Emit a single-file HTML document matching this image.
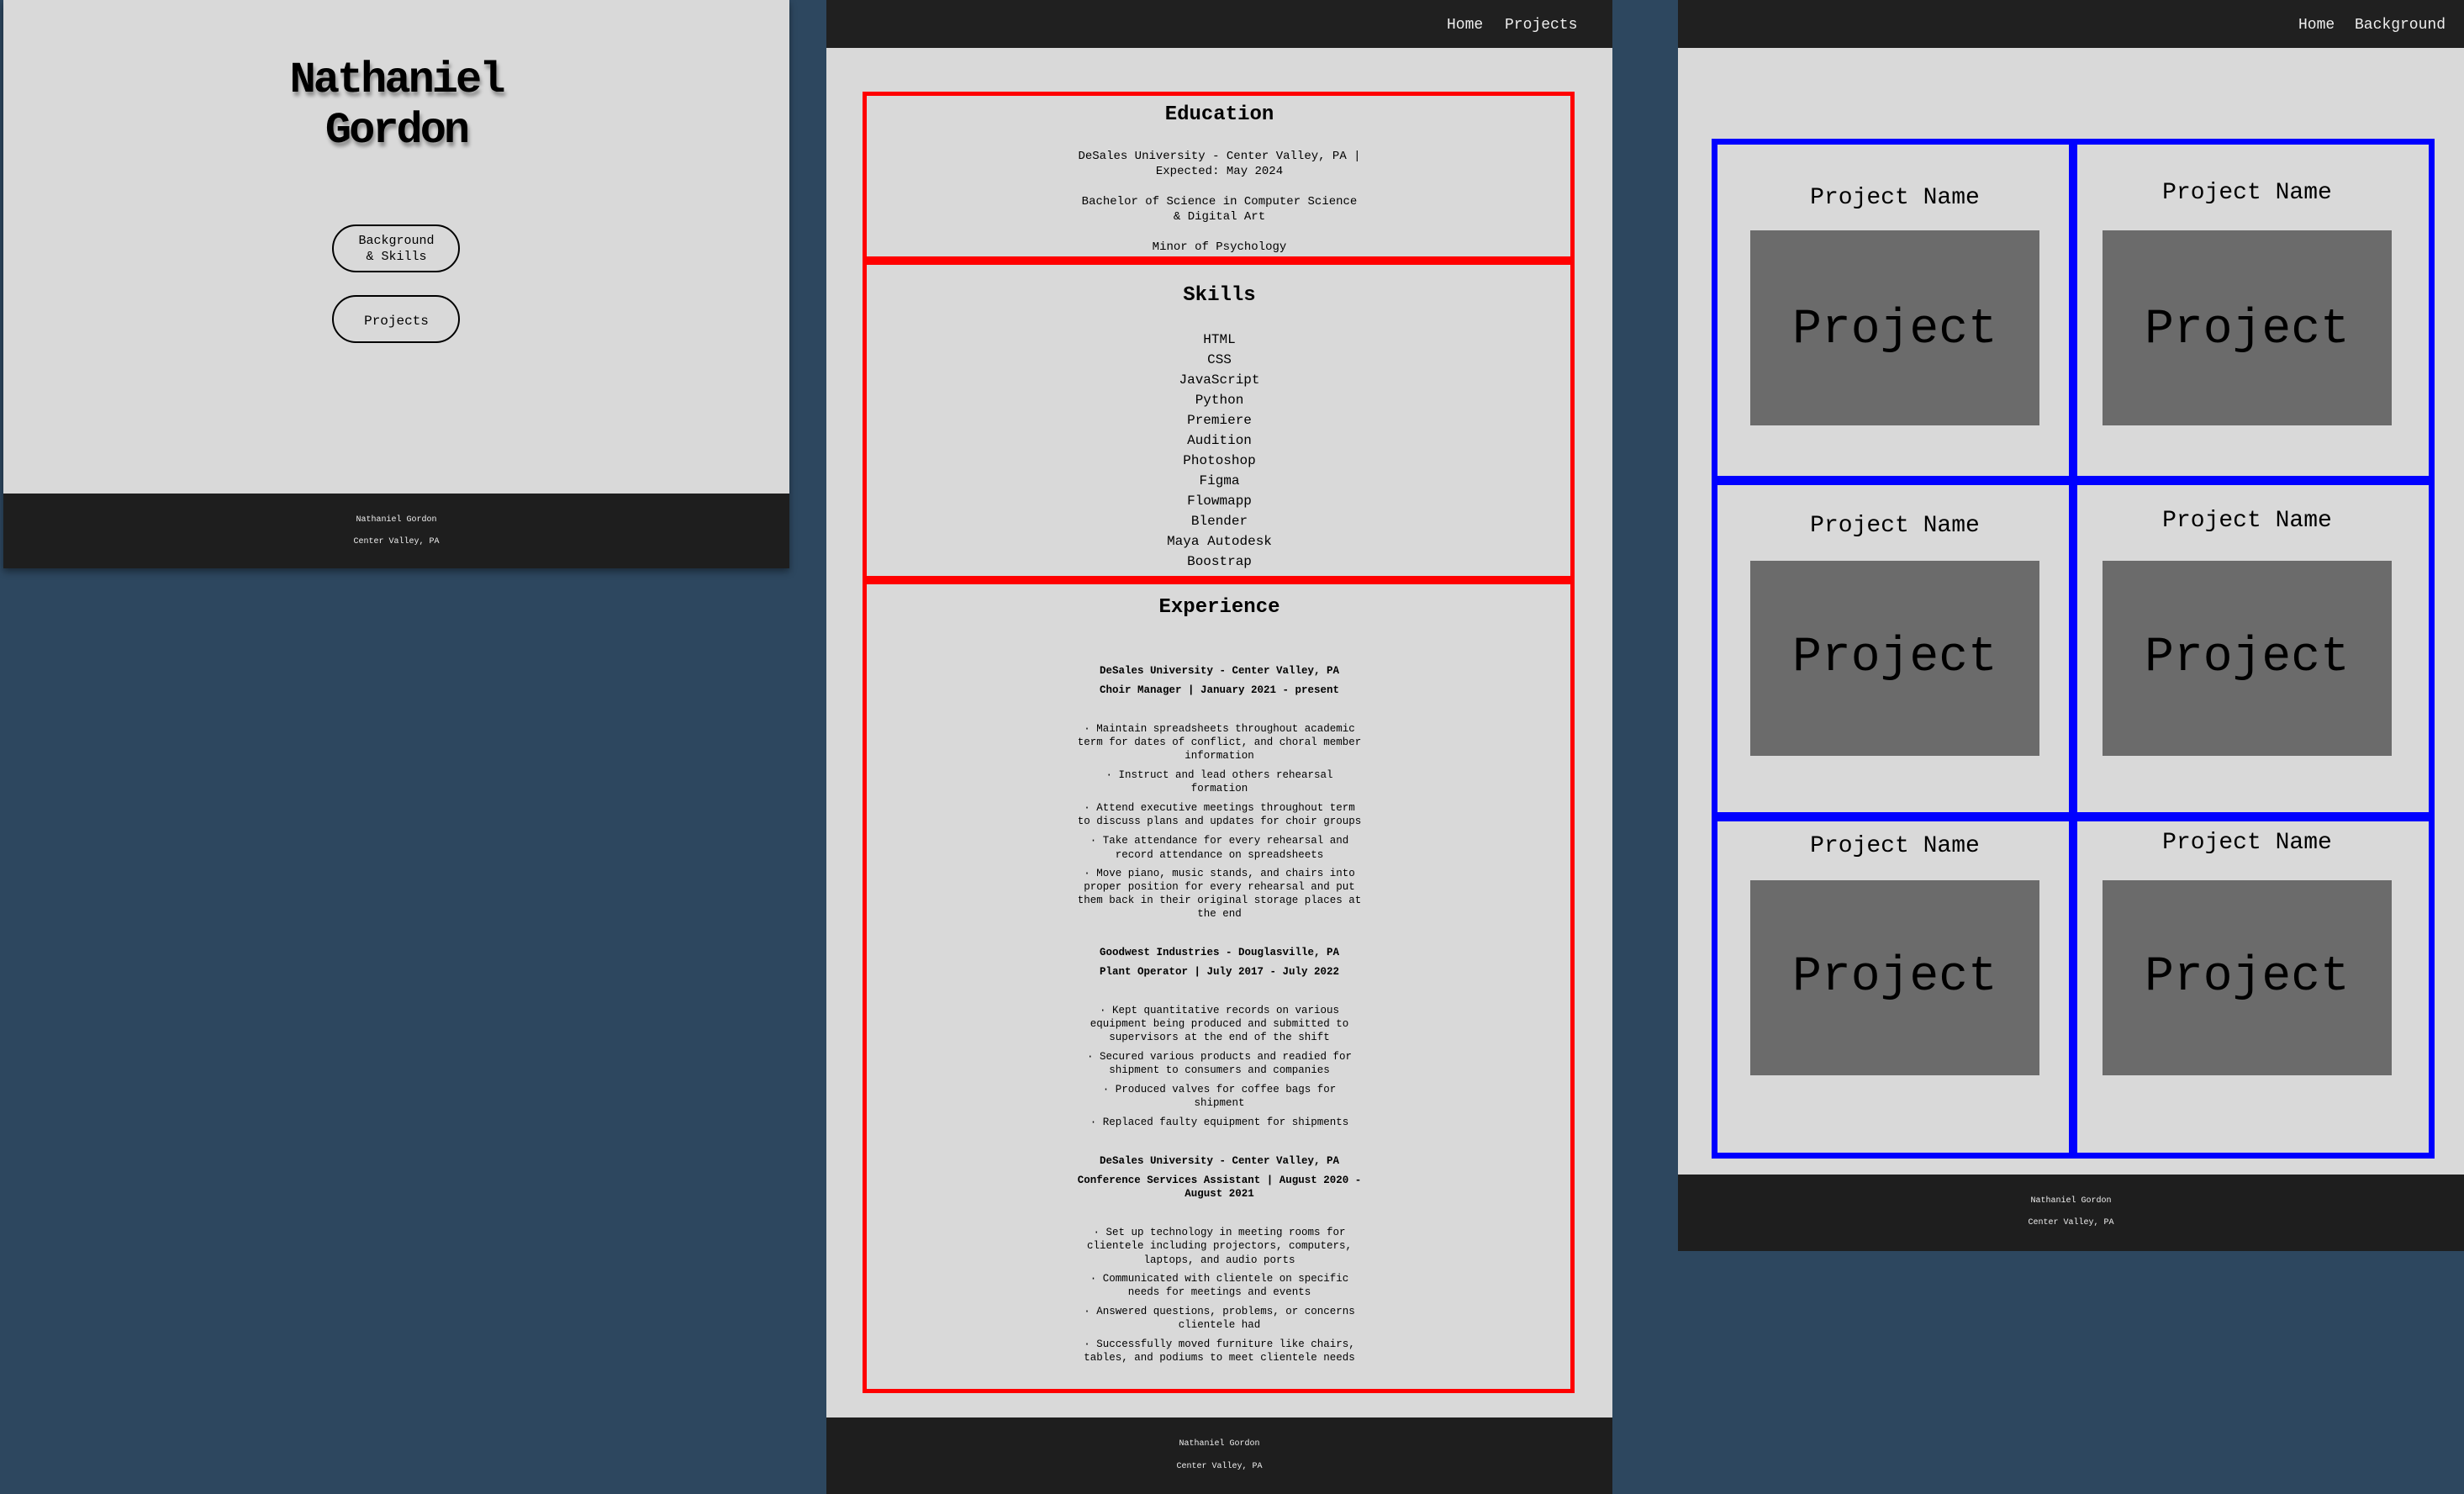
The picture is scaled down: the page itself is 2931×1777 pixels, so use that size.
<!DOCTYPE html>
<html><head><meta charset="utf-8"><style>
*{margin:0;padding:0;box-sizing:border-box}
body{width:2931px;height:1777px;background:#2d475f;position:relative;overflow:hidden;font-family:"Liberation Mono","DejaVu Sans Mono",monospace;color:#000}
.p{position:absolute;background:#d9d9d9;overflow:hidden}
.t{position:absolute;left:0;right:0;text-align:center;white-space:nowrap}
.ft{position:absolute;left:0;right:0;background:#1e1e1e;color:#eee}
.nav{position:absolute;left:0;right:0;top:0;height:57px;background:#202020;color:#eee;font-size:18px}
.rb{position:absolute;left:43px;width:847px;border:5px solid #f00}
.bx{position:absolute;background:#6b6b6b;width:344px;height:232px}
.bl{position:absolute;background:#00f}
.e{font-size:12.5px;line-height:16px;height:16px}
.eb{font-size:12.5px;font-weight:bold;line-height:16px;height:16px}
.sk{font-size:16px;line-height:20px;height:20px}
</style></head><body>

<!-- Panel 1 -->
<div class="p" style="left:4px;top:0;width:935px;height:676px;box-shadow:0 4px 8px rgba(0,0,0,.4)">
 <div class="t" style="top:66px;font-size:52px;font-weight:bold;letter-spacing:-3px;line-height:60px;text-shadow:2px 5px 4px rgba(0,0,0,.35)">Nathaniel<br>Gordon</div>
 <div style="position:absolute;left:391px;top:267px;width:152px;height:57px;border:2px solid #000;border-radius:29px"></div>
 <div class="t" style="top:277px;font-size:15px;line-height:19px">Background<br>&amp; Skills</div>
 <div style="position:absolute;left:391px;top:351px;width:152px;height:57px;border:2px solid #000;border-radius:29px"></div>
 <div class="t" style="top:372px;font-size:16px;line-height:20px">Projects</div>
 <div class="ft" style="top:587px;height:89px;font-size:10px">
  <div class="t" style="top:26px;line-height:12px">Nathaniel Gordon</div>
  <div class="t" style="top:52px;line-height:12px">Center Valley, PA</div>
 </div>
</div>

<!-- Panel 2 -->
<div class="p" style="left:983px;top:0;width:935px;height:1777px">
 <div class="nav"><span style="position:absolute;left:738px;top:20px">Home</span><span style="position:absolute;left:807px;top:20px">Projects</span></div>
 <div class="rb" style="top:109px;height:201px"></div>
 <div class="rb" style="top:310px;height:380px"></div>
 <div class="rb" style="top:690px;height:967px"></div>

 <div class="t" style="top:122px;font-size:24px;font-weight:bold;line-height:30px">Education</div>
 <div class="t" style="top:177px;font-size:14px;line-height:18px">DeSales University - Center Valley, PA |<br>Expected: May 2024</div>
 <div class="t" style="top:231px;font-size:14px;line-height:18px">Bachelor of Science in Computer Science<br>&amp; Digital Art</div>
 <div class="t" style="top:285px;font-size:14px;line-height:18px">Minor of Psychology</div>

 <div class="t" style="top:337px;font-size:24px;font-weight:bold;line-height:30px">Skills</div>
 <div class="t sk" style="top:394px">HTML</div>
 <div class="t sk" style="top:418px">CSS</div>
 <div class="t sk" style="top:442px">JavaScript</div>
 <div class="t sk" style="top:466px">Python</div>
 <div class="t sk" style="top:490px">Premiere</div>
 <div class="t sk" style="top:514px">Audition</div>
 <div class="t sk" style="top:538px">Photoshop</div>
 <div class="t sk" style="top:562px">Figma</div>
 <div class="t sk" style="top:586px">Flowmapp</div>
 <div class="t sk" style="top:610px">Blender</div>
 <div class="t sk" style="top:634px">Maya Autodesk</div>
 <div class="t sk" style="top:658px">Boostrap</div>

 <div class="t" style="top:708px;font-size:24px;font-weight:bold;line-height:30px">Experience</div>
 <div class="t eb" style="top:790px">DeSales University - Center Valley, PA</div>
 <div class="t eb" style="top:813px">Choir Manager | January 2021 - present</div>
 <div class="t e" style="top:859px">· Maintain spreadsheets throughout academic</div>
 <div class="t e" style="top:875px">term for dates of conflict, and choral member</div>
 <div class="t e" style="top:891px">information</div>
 <div class="t e" style="top:914px">· Instruct and lead others rehearsal</div>
 <div class="t e" style="top:930px">formation</div>
 <div class="t e" style="top:953px">· Attend executive meetings throughout term</div>
 <div class="t e" style="top:969px">to discuss plans and updates for choir groups</div>
 <div class="t e" style="top:992px">· Take attendance for every rehearsal and</div>
 <div class="t e" style="top:1009px">record attendance on spreadsheets</div>
 <div class="t e" style="top:1031px">· Move piano, music stands, and chairs into</div>
 <div class="t e" style="top:1047px">proper position for every rehearsal and put</div>
 <div class="t e" style="top:1063px">them back in their original storage places at</div>
 <div class="t e" style="top:1079px">the end</div>

 <div class="t eb" style="top:1125px">Goodwest Industries - Douglasville, PA</div>
 <div class="t eb" style="top:1148px">Plant Operator | July 2017 - July 2022</div>
 <div class="t e" style="top:1194px">· Kept quantitative records on various</div>
 <div class="t e" style="top:1210px">equipment being produced and submitted to</div>
 <div class="t e" style="top:1226px">supervisors at the end of the shift</div>
 <div class="t e" style="top:1249px">· Secured various products and readied for</div>
 <div class="t e" style="top:1265px">shipment to consumers and companies</div>
 <div class="t e" style="top:1288px">· Produced valves for coffee bags for</div>
 <div class="t e" style="top:1304px">shipment</div>
 <div class="t e" style="top:1327px">· Replaced faulty equipment for shipments</div>

 <div class="t eb" style="top:1373px">DeSales University - Center Valley, PA</div>
 <div class="t eb" style="top:1396px">Conference Services Assistant | August 2020 -</div>
 <div class="t eb" style="top:1412px">August 2021</div>
 <div class="t e" style="top:1458px">· Set up technology in meeting rooms for</div>
 <div class="t e" style="top:1474px">clientele including projectors, computers,</div>
 <div class="t e" style="top:1491px">laptops, and audio ports</div>
 <div class="t e" style="top:1513px">· Communicated with clientele on specific</div>
 <div class="t e" style="top:1529px">needs for meetings and events</div>
 <div class="t e" style="top:1552px">· Answered questions, problems, or concerns</div>
 <div class="t e" style="top:1568px">clientele had</div>
 <div class="t e" style="top:1591px">· Successfully moved furniture like chairs,</div>
 <div class="t e" style="top:1607px">tables, and podiums to meet clientele needs</div>

 <div class="ft" style="top:1686px;height:91px;font-size:10px">
  <div class="t" style="top:26px;line-height:12px">Nathaniel Gordon</div>
  <div class="t" style="top:53px;line-height:12px">Center Valley, PA</div>
 </div>
</div>

<!-- Panel 3 -->
<div class="p" style="left:1996px;top:0;width:935px;height:1488px">
 <div class="nav"><span style="position:absolute;left:738px;top:20px">Home</span><span style="position:absolute;left:805px;top:20px">Background</span></div>
 <div style="position:absolute;left:40px;top:165px;width:860px;height:1213px;border:7px solid #00f"></div>
 <div class="bl" style="left:465px;top:165px;width:10px;height:1213px"></div>
 <div class="bl" style="left:40px;top:566px;width:860px;height:11px"></div>
 <div class="bl" style="left:40px;top:966px;width:860px;height:11px"></div>

 <div class="bx" style="left:86px;top:274px"></div><div class="bx" style="left:505px;top:274px"></div>
 <div class="bx" style="left:86px;top:667px"></div><div class="bx" style="left:505px;top:667px"></div>
 <div class="bx" style="left:86px;top:1047px"></div><div class="bx" style="left:505px;top:1047px"></div>

 <div class="t" style="left:86px;right:auto;width:344px;top:219px;font-size:28px;line-height:34px">Project Name</div>
 <div class="t" style="left:505px;right:auto;width:344px;top:213px;font-size:28px;line-height:34px">Project Name</div>
 <div class="t" style="left:86px;right:auto;width:344px;top:609px;font-size:28px;line-height:34px">Project Name</div>
 <div class="t" style="left:505px;right:auto;width:344px;top:603px;font-size:28px;line-height:34px">Project Name</div>
 <div class="t" style="left:86px;right:auto;width:344px;top:990px;font-size:28px;line-height:34px">Project Name</div>
 <div class="t" style="left:505px;right:auto;width:344px;top:986px;font-size:28px;line-height:34px">Project Name</div>

 <div class="t" style="left:86px;right:auto;width:344px;top:355px;font-size:58px;line-height:76px">Project</div>
 <div class="t" style="left:505px;right:auto;width:344px;top:355px;font-size:58px;line-height:76px">Project</div>
 <div class="t" style="left:86px;right:auto;width:344px;top:745px;font-size:58px;line-height:76px">Project</div>
 <div class="t" style="left:505px;right:auto;width:344px;top:745px;font-size:58px;line-height:76px">Project</div>
 <div class="t" style="left:86px;right:auto;width:344px;top:1125px;font-size:58px;line-height:76px">Project</div>
 <div class="t" style="left:505px;right:auto;width:344px;top:1125px;font-size:58px;line-height:76px">Project</div>

 <div class="ft" style="top:1397px;height:91px;font-size:10px">
  <div class="t" style="top:26px;line-height:12px">Nathaniel Gordon</div>
  <div class="t" style="top:52px;line-height:12px">Center Valley, PA</div>
 </div>
</div>
</body></html>
